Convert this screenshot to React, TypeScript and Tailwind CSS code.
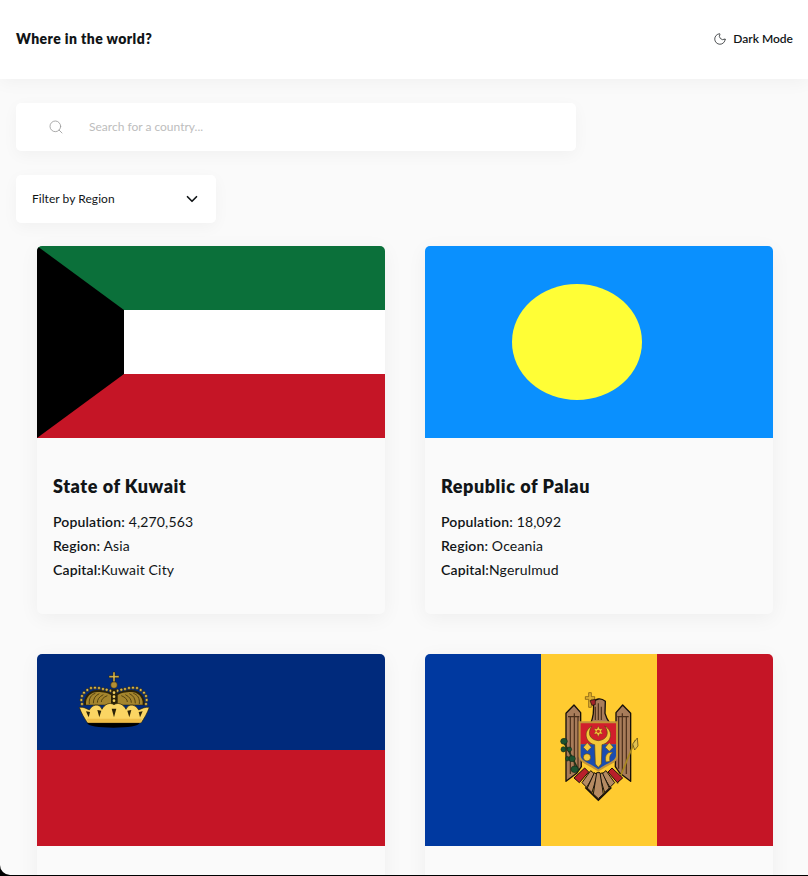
import { Moon, Search, ChevronDown } from "lucide-react";
import type { ReactNode } from "react";

function Kuwait() {
  return (
    <svg viewBox="0 0 348 192" className="block w-full h-full" preserveAspectRatio="none">
      <rect width="348" height="64" fill="#0b703a" />
      <rect y="64" width="348" height="64" fill="#ffffff" />
      <rect y="128" width="348" height="64" fill="#c51526" />
      <polygon points="0,0 87,64 87,128 0,192" fill="#000000" />
    </svg>
  );
}

function Palau() {
  return (
    <svg viewBox="0 0 348 192" className="block w-full h-full" preserveAspectRatio="none">
      <rect width="348" height="192" fill="#0a90fe" />
      <ellipse cx="152" cy="96" rx="65" ry="58" fill="#fffe36" />
    </svg>
  );
}

function Liechtenstein() {
  const left = [
    [66, 132], [64, 120], [66, 108], [72, 98], [82, 90], [93, 84], [105, 83], [117, 84], [129, 87], [140, 89], [152, 92],
  ];
  return (
    <svg viewBox="0 0 348 192" className="block w-full h-full" preserveAspectRatio="none">
      <rect width="348" height="96" fill="#002a7c" />
      <rect y="96" width="348" height="96" fill="#c51526" />
      <g transform="translate(23 6) scale(0.3333)" className="blur-[0.4px]">
        <ellipse cx="160" cy="190" rx="78" ry="13" fill="#000000" />
        <path d="M72 136 C70 106 90 90 112 90 C132 90 150 96 158 102 L158 136 Z" fill="#2a2208" />
        <path d="M254 136 C256 106 236 90 214 90 C194 90 176 96 168 102 L168 136 Z" fill="#2a2208" />
        <path d="M78 134 C76 110 94 96 112 96 C130 96 146 100 153 105 L153 134 Z" fill="#a5852d" />
        <path d="M248 134 C250 110 232 96 214 96 C196 96 180 100 173 105 L173 134 Z" fill="#a5852d" />
        <g stroke="#54420f" strokeWidth="3" fill="none">
          <path d="M88 132 C86 114 94 104 106 100" />
          <path d="M100 130 C100 116 106 106 118 101" />
          <path d="M112 128 C112 118 118 110 130 104" />
          <path d="M124 126 C124 118 130 112 142 107" />
          <path d="M238 132 C240 114 232 104 220 100" />
          <path d="M226 130 C226 116 220 106 208 101" />
          <path d="M214 128 C214 118 208 110 196 104" />
          <path d="M202 126 C202 118 196 112 184 107" />
        </g>
        {left.map(([x, y]) => (
          <circle key={`l${x}`} cx={x} cy={y} r="4.5" fill="#d8b64c" stroke="#241c06" strokeWidth="1.5" />
        ))}
        {left.map(([x, y]) => (
          <circle key={`r${x}`} cx={324 - x} cy={y} r="4.5" fill="#d8b64c" stroke="#241c06" strokeWidth="1.5" />
        ))}
        <rect x="154" y="88" width="16" height="50" fill="#2a2208" />
        <circle cx="162" cy="98" r="4" fill="#f0cf62" />
        <circle cx="162" cy="110" r="4" fill="#f0cf62" />
        <circle cx="162" cy="122" r="4" fill="#f0cf62" />
        <circle cx="162" cy="75" r="10" fill="#b48f34" stroke="#241c06" strokeWidth="1.5" />
        <path d="M159 36 H165 V47 H177 V53 H165 V65 H159 V53 H147 V47 H159 Z" fill="#d8b64c" stroke="#241c06" strokeWidth="1.5" />
        <path
          d="M58 142 C70 140 80 146 88 150 C96 134 118 128 126 148 C134 132 150 126 162 134 C174 126 190 132 198 148 C206 128 228 134 236 150 C244 146 256 140 268 142 C262 160 252 176 244 188 H82 C74 176 64 160 58 142 Z"
          fill="#fbd563"
          stroke="#2a2208"
          strokeWidth="2"
        />
        <path d="M80 176 H246 L242 188 H84 Z" fill="#efbd48" />
        <g fill="#2a2208">
          <path d="M78 154 L90 156 L86 172 Z" />
          <path d="M112 150 L124 152 L118 172 Z" />
          <path d="M155 146 L169 146 L162 172 Z" />
          <path d="M202 152 L214 150 L208 172 Z" />
          <path d="M236 156 L248 154 L240 172 Z" />
        </g>
      </g>
    </svg>
  );
}

function Moldova() {
  return (
    <svg viewBox="0 0 348 192" className="block w-full h-full" preserveAspectRatio="none">
      <rect width="116" height="192" fill="#0039a0" />
      <rect x="116" width="116" height="192" fill="#ffcb30" />
      <rect x="232" width="116" height="192" fill="#c51526" />
      <g transform="translate(115 6) scale(0.3333)" className="blur-[0.4px]">
        <g stroke="#17100a" strokeWidth="4" strokeLinejoin="round">
          <path d="M78 364 V160 L102 135 L122 158 V190 L124 320 L110 340 Z" fill="#a87c5a" />
          <path d="M272 364 V160 L248 135 L228 158 V190 L226 320 L240 340 Z" fill="#a87c5a" />
          <path d="M152 190 C160 172 162 148 160 128 C166 116 182 112 196 124 L195 160 C198 172 204 182 210 190 Z" fill="#a87c5a" />
        </g>
        <g stroke="#4a2e1a" strokeWidth="3.5" fill="none">
          <path d="M91 172 V342 M103 160 V336 M114 172 V326 M84 170 H118" />
          <path d="M259 172 V342 M247 160 V336 M236 172 V326 M232 170 H266" />
          <path d="M175 130 V180 M184 140 V180 M166 140 V180" />
        </g>
        <g fill="#b58a62" stroke="#17100a" strokeWidth="3" strokeLinejoin="round">
          <path d="M152 332 L126 368 L140 382 L164 342 Z" />
          <path d="M163 338 L142 384 L156 398 L172 344 Z" />
          <path d="M198 332 L224 368 L210 382 L186 342 Z" />
          <path d="M187 338 L208 384 L194 398 L178 344 Z" />
          <path d="M170 338 L160 402 L175 416 L190 402 L180 338 Z" />
        </g>
        <path d="M136 382 L175 420 L214 382" stroke="#17100a" strokeWidth="5" fill="none" />
        <path d="M146 98 H154 V110 H164 V118 H154 V142 H146 V118 H136 V110 H146 Z" fill="#e0b030" stroke="#6a4c10" strokeWidth="2" />
        <path d="M150 122 L166 118 L166 134 L156 136 Z" fill="#a5232a" stroke="#17100a" strokeWidth="2" />
        <path d="M116 184 H234 V290 C230 312 195 318 175 336 C155 318 120 312 116 290 Z" fill="#c3943a" />
        <path d="M122 190 H228 V253 H122 Z" fill="#d11f2c" />
        <path d="M122 253 H228 V288 C225 306 194 312 175 328 C156 312 125 306 122 288 Z" fill="#1b4db0" />
        <path d="M156 198 C126 214 138 250 164 254 L166 312 L175 322 L184 312 L186 254 C212 250 224 214 194 198 C210 220 200 240 175 242 C150 240 140 220 156 198 Z" fill="#f5c83a" stroke="#5c4510" strokeWidth="2" />
        <path d="M175 198 L179 207 L188 206 L183 214 L188 222 L179 221 L175 230 L171 221 L162 222 L167 214 L162 206 L171 207 Z" fill="#f5c83a" stroke="#5c4510" strokeWidth="1" />
        <circle cx="175" cy="214" r="5" fill="#c93a1e" />
        <circle cx="141" cy="292" r="11" fill="#f5c83a" stroke="#5c4510" strokeWidth="2" />
        <path d="M130 262 L142 248 L154 262 L142 274 Z" fill="#f5c83a" stroke="#5c4510" strokeWidth="1.5" />
        <path d="M196 262 L208 248 L220 262 L208 274 Z" fill="#f5c83a" stroke="#5c4510" strokeWidth="1.5" />
        <path d="M198 306 C192 284 206 274 218 278 C208 284 208 294 210 304 Z" fill="#f5c83a" stroke="#5c4510" strokeWidth="1.5" />
        <path d="M66 240 C78 256 92 282 116 332" stroke="#22351a" strokeWidth="5" fill="none" />
        <g fill="#1c5230" stroke="#0d1c10" strokeWidth="1.5">
          <ellipse cx="72" cy="244" rx="10" ry="9" />
          <ellipse cx="70" cy="268" rx="7" ry="8" />
          <ellipse cx="88" cy="268" rx="7" ry="7" />
          <ellipse cx="96" cy="296" rx="10" ry="9" />
          <ellipse cx="82" cy="296" rx="5" ry="7" />
          <ellipse cx="104" cy="328" rx="11" ry="10" />
        </g>
        <path d="M286 240 L232 372" stroke="#a8871f" strokeWidth="5" fill="none" />
        <path d="M278 252 L292 234 L294 258 L284 270 Z" fill="#e0c050" stroke="#4a3a10" strokeWidth="2" />
        <path d="M102 354 L134 324 L146 336 L118 368 Z" fill="#b81f2a" stroke="#17100a" strokeWidth="3" />
        <path d="M248 354 L216 324 L204 336 L232 368 Z" fill="#b81f2a" stroke="#17100a" strokeWidth="3" />
      </g>
    </svg>
  );
}

function Card({ flag, name, population, region, capital }: { flag: ReactNode; name?: string; population?: string; region?: string; capital?: string }) {
  return (
    <article className="overflow-hidden rounded-[5px] bg-[#fafafa] shadow-[0_4px_20px_rgba(0,0,0,0.05)]">
      <div className="h-[192px]">{flag}</div>
      {name ? (
        <div className="px-4 pt-9 pb-8 text-[#111517]">
          <h2 className="text-[18px] leading-6 font-extrabold tracking-[0.55px]">{name}</h2>
          <ul className="mt-3 text-[14px] leading-6 tracking-[0.15px]">
            <li><b className="font-semibold">Population:</b> {population}</li>
            <li><b className="font-semibold">Region:</b> {region}</li>
            <li><b className="font-semibold">Capital:</b>{capital}</li>
          </ul>
        </div>
      ) : (
        <div className="h-[176px]" />
      )}
    </article>
  );
}

export default function App() {
  return (
    <div className="h-[876px] w-[808px] overflow-hidden bg-black font-['Lato','Noto_Sans',sans-serif]">
      <div className="h-[875px] overflow-hidden rounded-bl-[10px] bg-[#fafafa]">
        <header className="relative flex h-[79px] items-center justify-between bg-white pl-4 pr-[15px] pb-[3px] shadow-[0_4px_16px_rgba(0,0,0,0.04)]">
          <h1 className="text-[14px] font-extrabold tracking-[0.42px] text-[#111517]">Where in the world?</h1>
          <div className="mt-[2px] flex items-center gap-[6px] text-[12px] font-semibold text-[#111517]">
            <Moon size={14} strokeWidth={1.25} />
            <span>Dark Mode</span>
          </div>
        </header>
        <main className="px-4 pt-6">
          <div className="flex h-12 w-[560px] items-center rounded-[5px] bg-white pl-[32px] shadow-[0_4px_16px_rgba(0,0,0,0.04)]">
            <Search size={16} strokeWidth={1.25} className="text-[#9a9a9a]" />
            <span className="ml-[25px] text-[12px] text-[#bdbdbd]">Search for a country...</span>
          </div>
          <div className="mt-6 flex h-12 w-[200px] items-center justify-between rounded-[5px] bg-white pl-4 pr-[15px] shadow-[0_4px_16px_rgba(0,0,0,0.04)]">
            <span className="text-[12px] tracking-[0.05px] text-[#111517]">Filter by Region</span>
            <ChevronDown size={18} strokeWidth={2.25} className="text-[#111517]" />
          </div>
          <section className="mt-[23px] ml-[21px] grid grid-cols-[348px_348px] gap-x-10 gap-y-10">
            <Card flag={<Kuwait />} name="State of Kuwait" population="4,270,563" region="Asia" capital="Kuwait City" />
            <Card flag={<Palau />} name="Republic of Palau" population="18,092" region="Oceania" capital="Ngerulmud" />
            <Card flag={<Liechtenstein />} />
            <Card flag={<Moldova />} />
          </section>
        </main>
      </div>
    </div>
  );
}
